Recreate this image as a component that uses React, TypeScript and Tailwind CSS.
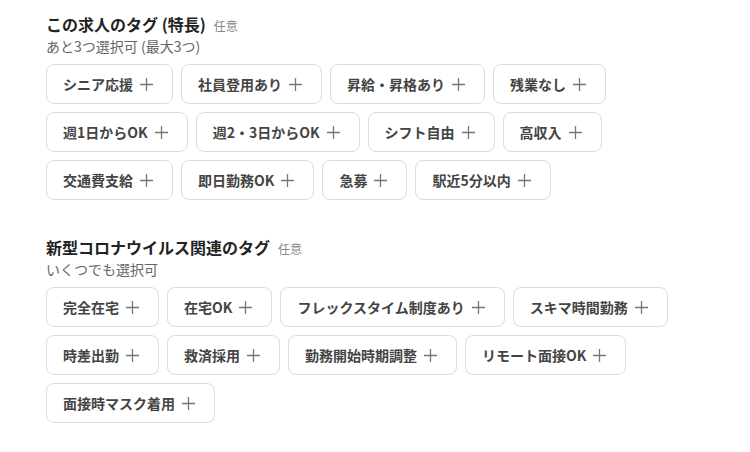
const FEATURE_TAGS = [
  "シニア応援",
  "社員登用あり",
  "昇給・昇格あり",
  "残業なし",
  "週1日からOK",
  "週2・3日からOK",
  "シフト自由",
  "高収入",
  "交通費支給",
  "即日勤務OK",
  "急募",
  "駅近5分以内",
];

const COVID_TAGS = [
  "完全在宅",
  "在宅OK",
  "フレックスタイム制度あり",
  "スキマ時間勤務",
  "時差出勤",
  "救済採用",
  "勤務開始時期調整",
  "リモート面接OK",
  "面接時マスク着用",
];

function PlusMark() {
  return (
    <svg viewBox="0 0 13 13" className="size-[13px] shrink-0" fill="none" stroke="#777" strokeWidth={1.3}>
      <path d="M6.5 0v13M0 6.5h13" />
    </svg>
  );
}

function TagChip({ label }: { label: string }) {
  return (
    <button
      type="button"
      className="flex h-10 items-center gap-[7px] rounded-lg border border-[#dcdcdc] bg-white pl-4 pr-[19px] text-sm font-bold text-[#444]"
    >
      <span>{label}</span>
      <PlusMark />
    </button>
  );
}

function TagSection({ title, note, tags }: { title: string; note: string; tags: string[] }) {
  return (
    <section>
      <div className="flex items-baseline gap-2">
        <h2 className="text-base leading-6 font-bold text-[#222]">{title}</h2>
        <span className="text-xs text-[#888]">任意</span>
      </div>
      <p className="text-sm leading-5 text-[#666]">{note}</p>
      <div className="mt-2 flex max-w-[660px] flex-wrap gap-2">
        {tags.map((t) => (
          <TagChip key={t} label={t} />
        ))}
      </div>
    </section>
  );
}

export default function App() {
  return (
    <div
      className="min-h-[452px] w-[750px] bg-white pt-3 pl-[46px]"
      style={{ fontFamily: '"Noto Sans CJK JP", "Noto Sans", sans-serif' }}
    >
      <div className="flex flex-col gap-[35px]">
        <TagSection title="この求人のタグ (特長)" note="あと3つ選択可 (最大3つ)" tags={FEATURE_TAGS} />
        <TagSection title="新型コロナウイルス関連のタグ" note="いくつでも選択可" tags={COVID_TAGS} />
      </div>
    </div>
  );
}
